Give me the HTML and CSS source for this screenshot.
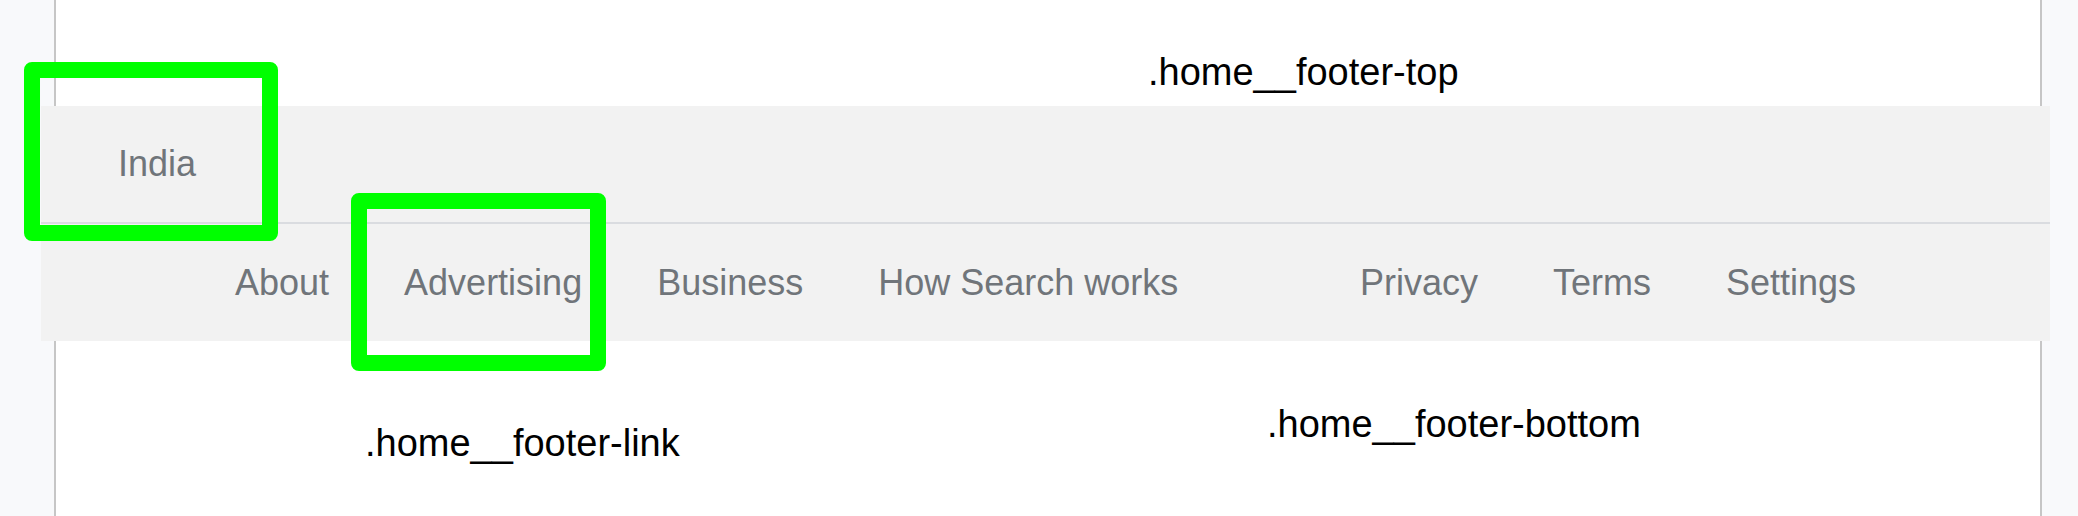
FILE: index.html
```html
<!DOCTYPE html>
<html lang="en">
<head>
  <meta charset="UTF-8" />
  <title>Home footer</title>
  <link rel="stylesheet" href="styles.css">
</head>
<body>

  <div class="page">

    <!-- Footer -->
    <footer class="home__footer">
      <div class="home__footer-top">
        <span class="home__footer-country">India</span>
      </div>
      <div class="home__footer-bottom">
        <div class="home__footer-group">
          <a class="home__footer-link">About</a>
          <a class="home__footer-link">Advertising</a>
          <a class="home__footer-link">Business</a>
          <a class="home__footer-link">How Search works</a>
        </div>
        <div class="home__footer-group">
          <a class="home__footer-link">Privacy</a>
          <a class="home__footer-link">Terms</a>
          <a class="home__footer-link">Settings</a>
        </div>
      </div>
    </footer>

    <!-- Annotations -->
    <div class="mark mark-country"></div>
    <div class="mark mark-link"></div>
    <span class="note note-top">.home__footer-top</span>
    <span class="note note-link">.home__footer-link</span>
    <span class="note note-bottom">.home__footer-bottom</span>

  </div>

</body>
</html>
```

FILE: styles.css
```css
body {
  margin: 0;
  background: #f8f9fb;
  font-family: "Liberation Sans", Arial, sans-serif;
  overflow: hidden;
}

.page {
  position: relative;
  width: 1988px;
  height: 516px;
  margin-left: 54px;
  padding-top: 106px;
  box-sizing: border-box;
  background: #fff;
  border-left: 2px solid #c6c6c6;
  border-right: 2px solid #c6c6c6;
}

.home__footer {
  background: #f2f2f2;
  margin: 0 -10px 0 -15px;
  color: #70757a;
  font-size: 36px;
}

.home__footer-top {
  height: 116px;
  line-height: 116px;
  padding-left: 77px;
  border-bottom: 2px solid #dadce0;
}

.home__footer-bottom {
  display: flex;
  justify-content: space-between;
  height: 117px;
  line-height: 117px;
  padding: 0 194px;
}

.home__footer-group {
  display: flex;
  gap: 75px;
}

.home__footer-link {
  color: #70757a;
  text-decoration: none;
  cursor: pointer;
}

/* green highlight boxes */
.mark {
  position: absolute;
  border: 16px solid #00ff00;
  border-radius: 8px;
  box-sizing: border-box;
}

.mark-country {
  left: -32px;
  top: 62px;
  width: 254px;
  height: 179px;
}

.mark-link {
  left: 295px;
  top: 193px;
  width: 255px;
  height: 178px;
}

.note {
  position: absolute;
  font-size: 38px;
  line-height: 1;
  color: #000;
  white-space: nowrap;
}

.note-top {
  left: 1092px;
  top: 53px;
}

.note-link {
  left: 309px;
  top: 424px;
}

.note-bottom {
  left: 1211px;
  top: 405px;
}
```
